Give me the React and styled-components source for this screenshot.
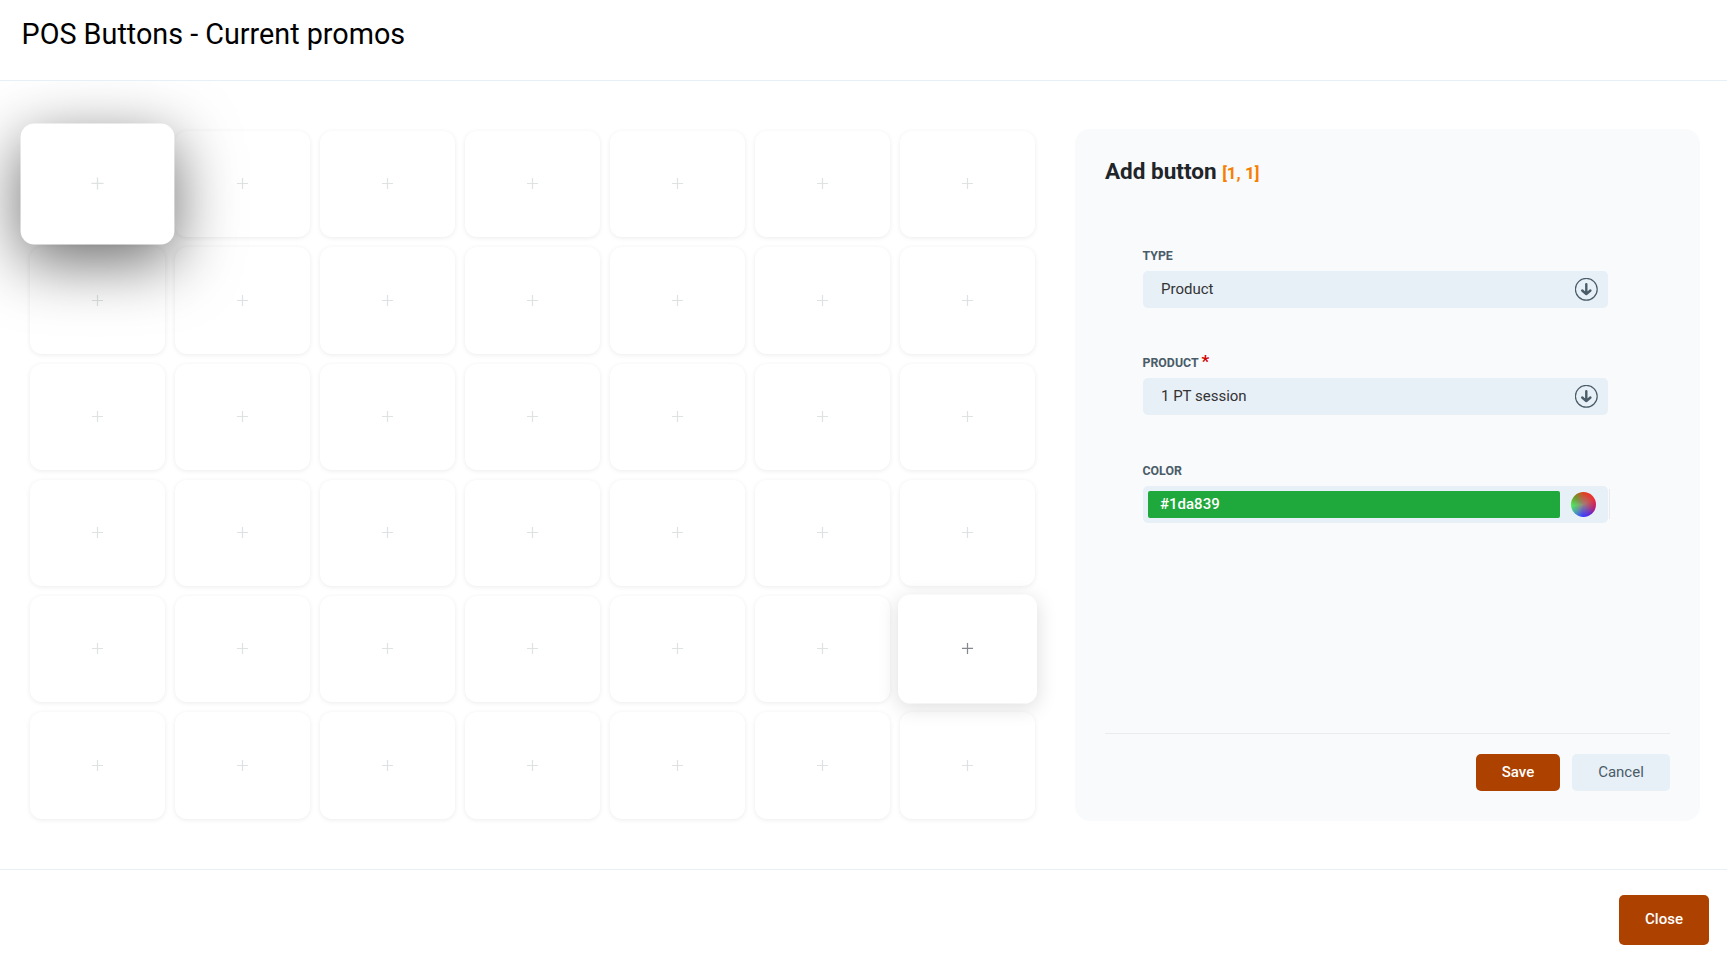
import React from 'react'
import styled, { createGlobalStyle, css } from 'styled-components'

const GlobalStyle = createGlobalStyle`
    * {
        box-sizing: border-box;
    }
    body {
        margin: 0;
        background: #fff;
        color: #212529;
        font-family: Roboto, "Liberation Sans", sans-serif;
        font-size: 15px;
    }
`

const Container = styled.div`
    height: 100vh;
    display: flex;
    flex-direction: column;
    overflow: hidden;
`
const Header = styled.header`
    height: 81px;
    padding: 15px 21.5px;
    border-bottom: 1px solid #e7eff7;
`
const Heading = styled.h1`
    margin: 0;
    color: #000;
    font-size: 28.75px;
    font-weight: 400;
    line-height: 38px;
`
const Content = styled.main`
    flex: 1;
    display: flex;
    justify-content: space-between;
    padding: 48px 27px 48px 30px;
    overflow: hidden;
`
const Grid = styled.div`
    width: 1005px;
    margin: 2px 0 2.5px;
    display: grid;
    grid-template-columns: repeat(7, 1fr);
    grid-template-rows: repeat(6, 1fr);
    gap: 10px;
`
const selected = css`
    z-index: 2;
    transform: scale(1.14);
    box-shadow: 0 15px 55px rgba(0, 0, 0, 0.59);
`
const hovered = css`
    z-index: 1;
    transform: scale(1.03);
    box-shadow: 0 4px 20px rgba(0, 0, 0, 0.13);
    color: #85888f;
`
const Cell = styled.div`
    display: flex;
    align-items: center;
    justify-content: center;
    padding-bottom: 0.5px;
    border-radius: 12px;
    background: #fff;
    color: #dfe2e3;
    box-shadow: 0 1px 5px rgba(0, 0, 0, 0.08);
    ${({ $state }) => $state === 'selected' && selected}
    ${({ $state }) => $state === 'hovered' && hovered}
`
const Panel = styled.section`
    width: 625px;
    padding: 30px;
    display: flex;
    flex-direction: column;
    border-radius: 15px;
    background: #f8fafc;
`
const Title = styled.h2`
    height: 24px;
    margin: 0;
    font-size: 22.5px;
    font-weight: 700;
    line-height: 24px;
`
const Position = styled.span`
    color: #f77f00;
    font-size: 17px;
`
const Form = styled.div`
    flex: 1;
    padding: 63px 62px 0 38px;
`
const Field = styled.div`
    height: 107.4px;
`
const Label = styled.label`
    display: flex;
    height: 25px;
    margin-left: -0.5px;
    color: #495c68;
    font-size: 12.35px;
    font-weight: 700;
    line-height: 20px;
    text-transform: uppercase;
`
const Required = styled.span`
    margin-left: 3px;
    color: #d30000;
    font-size: 17px;
    line-height: 16px;
`
const Select = styled.div`
    height: 37px;
    padding: 0 10px 0 18px;
    display: flex;
    align-items: center;
    justify-content: space-between;
    border-radius: 5px;
    background: #e7eff7;
    color: #333;
`
const Value = styled.span`
    height: 37px;
    line-height: 36px;
`
const ColorRow = styled.div`
    width: 467px;
    display: flex;
    align-items: center;
    gap: 1px;
`
const ColorInput = styled.div`
    width: 465px;
    height: 37px;
    padding: 5px 12px 5px 5px;
    display: flex;
    align-items: center;
    justify-content: space-between;
    border-radius: 5px;
    background: #e7eff7;
`
const ColorValue = styled.div`
    width: 412px;
    height: 27px;
    padding-left: 12px;
    border-radius: 2px;
    background: #1fa83b;
    color: #fff;
    font-weight: 500;
    line-height: 26px;
`
const Wheel = styled.div`
    width: 25px;
    height: 25px;
    border-radius: 50%;
    background:
        radial-gradient(circle, rgba(155, 130, 125, 0.95), rgba(155, 130, 125, 0) 66%),
        conic-gradient(#e0401c, #f02b32 60deg, #b51b78 110deg, #5a28e0 150deg, #3b3cff 185deg, #44a0b8 225deg, #4bee58 265deg, #6b9a25 310deg, #e0401c);
`
const Edge = styled.div`
    width: 1px;
    height: 30px;
    background: #e7ebee;
`
const Actions = styled.div`
    padding-top: 20px;
    display: flex;
    justify-content: flex-end;
    gap: 12px;
    border-top: 1px solid #e9ebed;
`
const Button = styled.button`
    width: ${({ $width }) => $width}px;
    height: ${({ $height }) => $height || 37}px;
    padding: 0 0 ${({ $height }) => ($height ? 3 : 1)}px;
    border: 0;
    border-radius: 5px;
    background: ${({ $light }) => ($light ? '#e7eff7' : '#ad4100')};
    color: ${({ $light }) => ($light ? '#495c68' : '#fff')};
    font: ${({ $light }) => ($light ? 400 : 500)} 15px Roboto, sans-serif;
`
const Footer = styled.footer`
    height: 100px;
    padding: 25px 18px;
    display: flex;
    justify-content: flex-end;
    border-top: 1px solid #e7eff7;
`

const PlusIcon = () => (
    <svg width="11" height="11" viewBox="0 0 11 11" fill="none" stroke="currentColor" strokeWidth="1.2">
        <path d="M5.5 0v11M0 5.5h11" />
    </svg>
)

const ArrowIcon = () => (
    <svg width="23" height="23" viewBox="0 0 23 23" fill="none" stroke="#495c68" strokeLinecap="round" strokeLinejoin="round">
        <circle cx="11.3" cy="11.3" r="10.9" strokeWidth="1.2" />
        <path d="M11.3 6.2v9.8M7.2 12.5l4.1 3.6 4.1-3.6" strokeWidth="2.4" />
    </svg>
)

const states = { 0: 'selected', 34: 'hovered' }

const App = () => {
    return (
        <Container>
            <GlobalStyle />
            <Header>
                <Heading>POS Buttons - Current promos</Heading>
            </Header>
            <Content>
                <Grid>
                    {Array.from({ length: 42 }, (_, i) => (
                        <Cell key={i} $state={states[i]}><PlusIcon /></Cell>
                    ))}
                </Grid>
                <Panel>
                    <Title>Add button <Position>[1, 1]</Position></Title>
                    <Form>
                        <Field>
                            <Label>Type</Label>
                            <Select><Value>Product</Value><ArrowIcon /></Select>
                        </Field>
                        <Field>
                            <Label>Product <Required>*</Required></Label>
                            <Select><Value>1 PT session</Value><ArrowIcon /></Select>
                        </Field>
                        <Field>
                            <Label>Color</Label>
                            <ColorRow>
                                <ColorInput>
                                    <ColorValue>#1da839</ColorValue>
                                    <Wheel />
                                </ColorInput>
                                <Edge />
                            </ColorRow>
                        </Field>
                    </Form>
                    <Actions>
                        <Button $width={84}>Save</Button>
                        <Button $width={98} $light>Cancel</Button>
                    </Actions>
                </Panel>
            </Content>
            <Footer>
                <Button $width={90} $height={50}>Close</Button>
            </Footer>
        </Container>
    )
}

export default App
